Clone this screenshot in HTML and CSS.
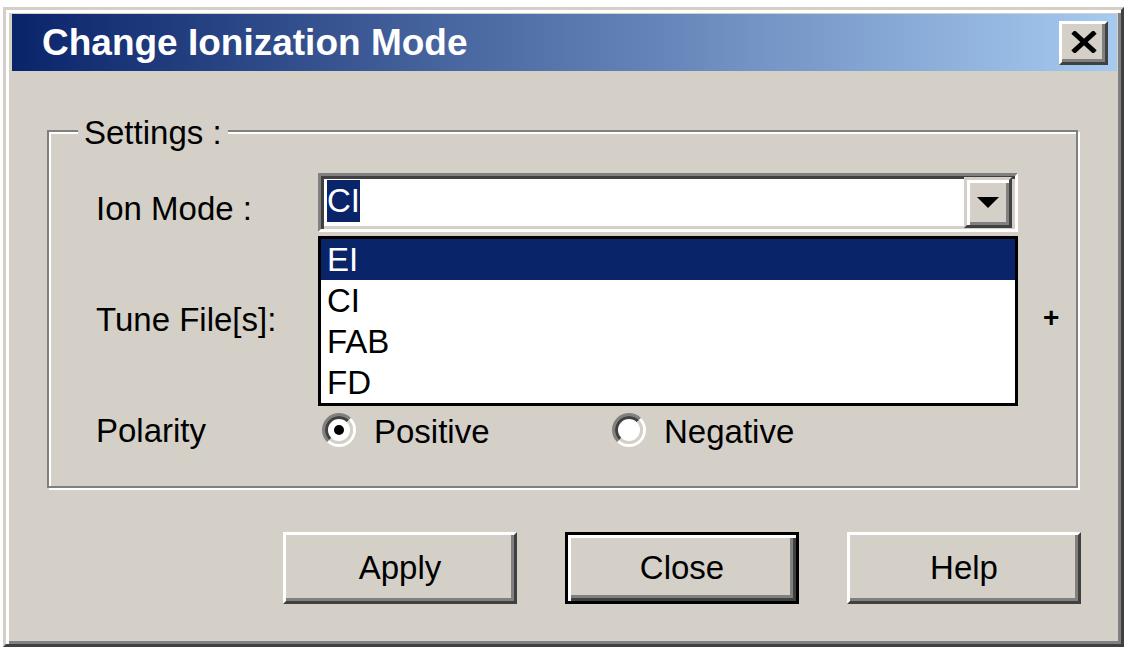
FILE: index.html
```html
<!DOCTYPE html>
<html>
<head>
<meta charset="utf-8">
<title>Change Ionization Mode</title>
<link rel="stylesheet" href="styles.css">
</head>
<body>
<div class="window">
  <div class="titlebar">
    <span class="title">Change Ionization Mode</span>
    <button class="close-btn" type="button" aria-label="Close">
      <svg width="28" height="22" viewBox="0 0 28 22"><path d="M3 1 L25 21 M25 1 L3 21" stroke="#000" stroke-width="5" fill="none"/></svg>
    </button>
  </div>

  <div class="group">
    <span class="group-label">Settings :</span>

    <div class="row row-ion">
      <span class="label">Ion Mode :</span>
      <div class="combo">
        <div class="combo-text"><span class="combo-sel">CI</span></div>
        <div class="combo-btn">
          <svg width="22" height="11" viewBox="0 0 22 11"><polygon points="0,0 22,0 11,11" fill="#000"/></svg>
        </div>
        <ul class="droplist">
          <li class="sel">EI</li>
          <li>CI</li>
          <li>FAB</li>
          <li>FD</li>
        </ul>
      </div>
    </div>

    <div class="row row-tune">
      <span class="label">Tune File[s]:</span>
      <div class="field"></div>
      <span class="plus">+</span>
    </div>

    <div class="row row-pol">
      <span class="label label-pol">Polarity</span>
      <div class="radios">
        <div class="radio">
          <span class="radio-circle"><span class="radio-inner"><span class="dot"></span></span></span>
          <span class="radio-text">Positive</span>
        </div>
        <div class="radio">
          <span class="radio-circle"><span class="radio-inner"></span></span>
          <span class="radio-text">Negative</span>
        </div>
      </div>
    </div>
  </div>

  <div class="buttons">
    <button class="btn" type="button">Apply</button>
    <button class="btn btn-default" type="button">Close</button>
    <button class="btn" type="button">Help</button>
  </div>
</div>
</body>
</html>
```

FILE: styles.css
```css
body {
  margin: 0;
  background: #ffffff;
  font-family: "Liberation Sans", Arial, sans-serif;
  color: #000;
}

.window {
  box-sizing: border-box;
  width: 1121px;
  height: 640px;
  margin: 7px 0 0 3px;
  background: #d4d0c8;
  border: 3px solid;
  border-color: #d4d0c8 #404040 #404040 #d4d0c8;
  box-shadow: inset 3px 3px #ffffff, inset -3px -3px #808080;
  padding: 4px 4px 6px 6px;
  display: flex;
  flex-direction: column;
}

.titlebar {
  flex: none;
  height: 57px;
  display: flex;
  align-items: center;
  padding: 0 9px 0 30px;
  background: linear-gradient(to right, #0a246a, #a6caf0);
}

.title {
  flex: 1;
  color: #fff;
  font-weight: bold;
  font-size: 37px;
  white-space: nowrap;
}

.close-btn {
  box-sizing: border-box;
  width: 49px;
  height: 44px;
  padding: 0 0 1px 0;
  background: #d4d0c8;
  border: 3px solid;
  border-color: #ffffff #404040 #404040 #ffffff;
  box-shadow: inset -3px -3px #808080;
  display: flex;
  align-items: center;
  justify-content: center;
}

.group {
  position: relative;
  box-sizing: border-box;
  width: 1031px;
  margin: 59px 0 0 35px;
  border: 2px solid #808080;
  box-shadow: 2px 2px 0 #ffffff, inset 2px 2px 0 #ffffff;
  padding: 41px 0 27px 47px;
}

.group-label {
  position: absolute;
  top: -16px;
  left: 29px;
  padding: 0 6px;
  background: #d4d0c8;
  font-size: 33px;
  line-height: 33px;
}

.row {
  display: grid;
  grid-template-columns: 222px max-content max-content;
  justify-content: start;
  align-items: start;
  height: 59px;
}

.row-ion { margin-bottom: 52px; }
.row-tune { margin-bottom: 57px; }

.label {
  font-size: 33px;
  line-height: 59px;
  height: 59px;
  box-sizing: border-box;
  padding-top: 6px;
  white-space: nowrap;
}

.label-pol { padding-top: 1px; }

.combo {
  position: relative;
  box-sizing: border-box;
  width: 700px;
  height: 59px;
  border: 3px solid;
  border-color: #808080 #ffffff #ffffff #808080;
  box-shadow: inset 3px 3px #404040, inset -3px -3px #d4d0c8;
  background: #ffffff;
  display: flex;
  padding: 1px 3px;
}

.combo-text {
  flex: 1;
  padding: 3px 0 0 3px;
}

.combo-sel {
  display: inline-block;
  height: 42px;
  line-height: 42px;
  background: #0a246a;
  color: #fff;
  font-size: 33px;
}

.combo-btn {
  box-sizing: border-box;
  width: 48px;
  background: #d4d0c8;
  border: 3px solid;
  border-color: #d4d0c8 #404040 #404040 #d4d0c8;
  box-shadow: inset 3px 3px #ffffff, inset -3px -3px #808080;
  display: flex;
  align-items: center;
  justify-content: center;
}

.droplist {
  position: absolute;
  top: 60px;
  left: -3px;
  z-index: 2;
  box-sizing: border-box;
  width: 700px;
  margin: 0;
  padding: 0;
  list-style: none;
  background: #ffffff;
  border: 3px solid #000;
}

.droplist li {
  height: 41px;
  line-height: 41px;
  padding-left: 6px;
  font-size: 33px;
}

.droplist li.sel {
  background: #0a246a;
  color: #ffffff;
}

.field {
  box-sizing: border-box;
  width: 700px;
  height: 59px;
  border: 3px solid;
  border-color: #808080 #ffffff #ffffff #808080;
  box-shadow: inset 3px 3px #404040, inset -3px -3px #d4d0c8;
  background: #ffffff;
}

.plus {
  margin-left: 25px;
  font-weight: bold;
  font-size: 28px;
  line-height: 59px;
  padding-top: 4px;
}

.radios {
  display: flex;
}

.radio {
  box-sizing: border-box;
  width: 290px;
  height: 59px;
  padding-left: 4px;
  display: flex;
  align-items: center;
  gap: 18px;
  font-size: 33px;
}

.radio-text { padding-top: 5px; }

.radio-circle {
  box-sizing: border-box;
  width: 34px;
  height: 34px;
  border-radius: 50%;
  border: 3px solid;
  border-color: #808080 #ffffff #ffffff #808080;
}

.radio-inner {
  box-sizing: border-box;
  width: 100%;
  height: 100%;
  border-radius: 50%;
  border: 3px solid;
  border-color: #404040 #d4d0c8 #d4d0c8 #404040;
  background: #ffffff;
  display: flex;
  align-items: center;
  justify-content: center;
}

.dot {
  width: 10px;
  height: 10px;
  border-radius: 50%;
  background: #000;
}

.buttons {
  display: flex;
  justify-content: flex-end;
  gap: 48px;
  margin-top: 44px;
  padding-right: 36px;
}

.btn {
  box-sizing: border-box;
  width: 234px;
  height: 72px;
  padding: 0;
  background: #d4d0c8;
  border: 3px solid;
  border-color: #ffffff #404040 #404040 #ffffff;
  box-shadow: inset -3px -3px #808080;
  font-family: "Liberation Sans", Arial, sans-serif;
  font-size: 33px;
  color: #000;
}

.btn-default {
  border-color: #000;
  box-shadow: inset 3px 3px #ffffff, inset -3px -3px #404040, inset -6px -6px #808080;
}
```
